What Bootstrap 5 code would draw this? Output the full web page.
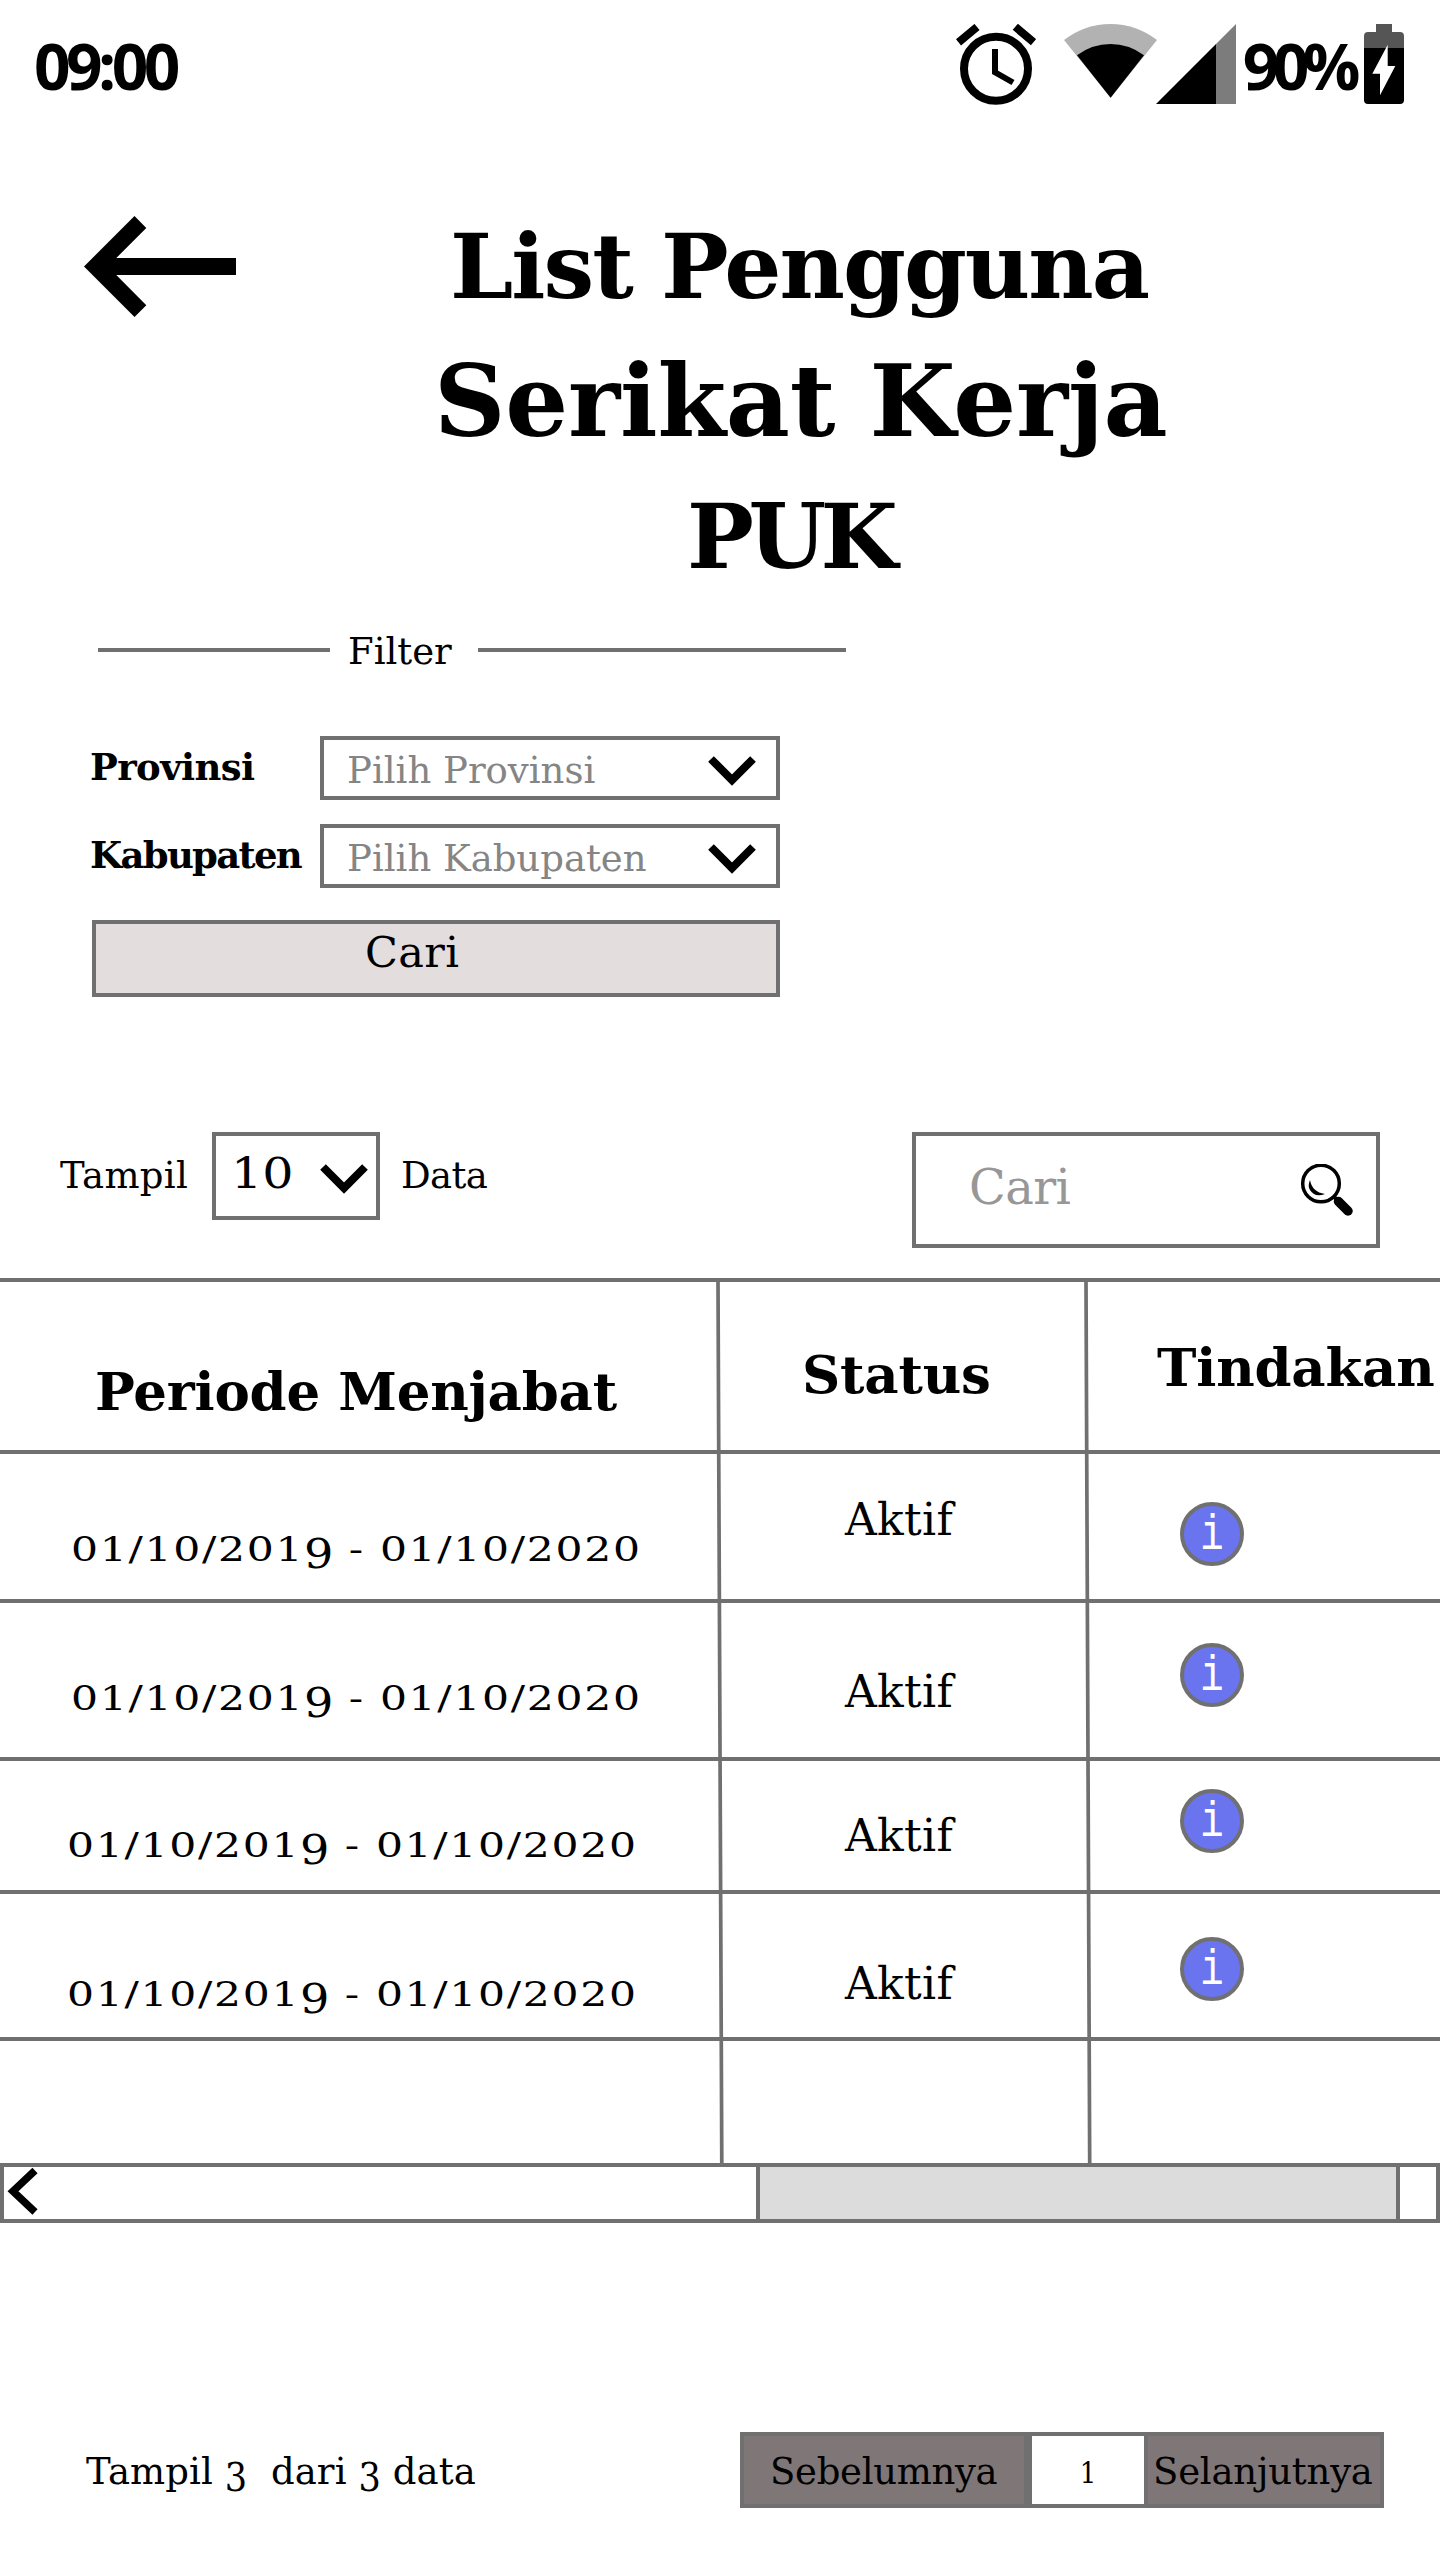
<!DOCTYPE html>
<html lang="id">
<head>
<meta charset="utf-8">
<meta name="viewport" content="width=device-width, initial-scale=1">
<title>List Pengguna Serikat Kerja PUK</title>
<link href="https://cdn.jsdelivr.net/npm/bootstrap@5.3.0/dist/css/bootstrap.min.css" rel="stylesheet">
<style>
:root{--line:#707070}
body{margin:0;background:#fff;color:#000;font-family:"DejaVu Serif",serif;font-size:37px;line-height:1;width:1440px;height:2560px;overflow:hidden}
svg{display:block;flex:none}
.txt{white-space:nowrap;line-height:1;flex:none}
/* status bar */
.statusbar{height:216px;padding:24px 36px 0 34px}
.sys{font:700 64px/1 "Open Sans","Noto Sans",sans-serif;letter-spacing:-4.6px;margin-top:10px}
.sys.level{letter-spacing:-6.5px;padding-left:7px}
.wifi{margin-left:28px}
.signal{margin-left:-1px}
.battery{margin-left:10px}
/* header */
.head{height:418px;padding-left:84px}
.title{margin:5px 0 0 214px;font-weight:700;font-size:90px;width:740px}
.title .l1{letter-spacing:-2px}
.title .l2{font-size:99px;letter-spacing:-.2px;margin:41px 0 0 -16px}
.title .l3{font-size:89px;letter-spacing:-5.5px;margin:41px 0 0 237px}
/* filter */
.legend-row{height:102px;padding-left:98px}
.legend-row .rule{height:4px;background:var(--line);margin-top:14px}
.legend-row .cap{width:148px;padding-left:18px;margin-top:-1px}
.rule.short{width:232px}
.rule.long{width:368px}
.field-row{height:88px;padding-left:90px}
.field-row .name{width:230px;font-weight:700;margin-top:13px;letter-spacing:-.6px}
.field-row .name.wide{letter-spacing:-1.7px}
.box{border:4px solid var(--line);background:#fff;border-radius:0}
.field{width:460px;height:64px;padding:12px 20px 0 23px;color:#858585}
.field svg{margin-top:4px}
.btn-cari{width:688px;height:77px;margin:8px 0 0 92px;padding:7px 0 0 269px;background:#e3dddd;font-size:43px;letter-spacing:.4px}
/* toolbar */
.tools{height:146px;margin-top:135px;padding-left:60px}
.tools .side{margin-top:25px}
.side.first{width:152px;letter-spacing:.3px}
.side.last{width:532px;padding-left:21px;letter-spacing:-.6px}
.count{width:168px;height:88px;padding:17px 8px 0 15px}
.count svg{margin-top:11px}
.ten{font-size:42px;transform:scaleX(1.17);transform-origin:0 0}
.search{width:468px;height:116px;padding:27px 22px 0 53px;color:#979797;font-size:48px;letter-spacing:-.6px}
.search svg{margin-top:1px}
/* table */
.grid-wrap{position:relative;height:885px}
.rules{position:absolute;left:0;top:0;pointer-events:none}
.grid{width:1440px;table-layout:fixed;border-collapse:separate;border-spacing:0;margin:0}
.grid th,.grid td{padding:0;border:0;border-top:4px solid var(--line);vertical-align:top;text-align:left}
.grid th{font-size:53px;font-weight:700;letter-spacing:-.2px;height:172px}
.period{font-size:34px;letter-spacing:1.35px;transform:scaleX(1.25);transform-origin:0 0;margin-left:71px}
.period.near{margin-left:67px}
.osf{font-family:"DejaVu Serif Condensed","DejaVu Serif",serif;vertical-align:-7px;line-height:0}
.period .osf{font-size:41px;letter-spacing:0}
.sum .osf{font-size:39px}
.state{font-size:44px;letter-spacing:.3px;margin-left:127px;padding-top:1px}
.info{width:64px;height:64px;border:4px solid var(--line);border-radius:50%;background:#6a74ee;color:#fff;margin-left:94px;overflow:hidden;padding-top:5px}
.info span{display:block;font:400 50px/1 "Liberation Mono",monospace;transform:scaleX(.78);text-align:center}
/* scrollbar */
.scroller{height:60px;width:1440px;border:4px solid var(--line)}
.thumb{width:644px;height:52px;border:solid var(--line);border-width:0 4px;background:#dcdcdc;margin-left:718px}
/* footer */
.foot{margin-top:209px;padding-left:86px}
.foot .sum{width:654px;margin-top:21px;letter-spacing:.1px}
.pager{width:644px;height:76px;background:#7f7677;border:4px solid var(--line)}
.pager .prev{width:280px;padding:17px 0 0 26px;letter-spacing:-.3px}
.pager .next{padding:17px 0 0 5px;letter-spacing:-.2px}
.pager .num{width:124px;height:68px;background:#fff;border:solid var(--line);border-width:0 4px 0 8px;text-align:center;font:29px/1 "DejaVu Serif Condensed","DejaVu Serif",serif;padding-top:23px}
</style>
<script src="https://cdn.jsdelivr.net/npm/bootstrap@5.3.0/dist/js/bootstrap.bundle.min.js"></script>
</head>
<body>
<header class="statusbar d-flex align-items-start justify-content-between">
  <div class="txt sys">09:00</div>
  <div class="d-flex align-items-start">
    <svg width="80" height="82" viewBox="956 24 80 82" fill="none" stroke="#000">
      <circle cx="996" cy="68.7" r="32" stroke-width="8"/>
      <path d="M995 49V72.3L1013 82.5" stroke-width="6"/>
      <path d="M958.5 42.3L977 27M1015.3 26.8L1033.5 42.2" stroke-width="8"/>
    </svg>
    <svg class="wifi" width="93" height="80" viewBox="1064 24 93 80"><path d="M1064 40Q1085 24 1110.5 24T1157 40L1110.6 97.7Z" fill="#b2b2b2"/><path d="M1077 55.3Q1092 44 1110.5 44T1144 55.3L1110.6 97.7Z"/></svg>
    <svg class="signal" width="80" height="80" viewBox="1156 24 80 80"><path d="M1156 104L1216 44V104Z"/><path d="M1216 44L1236 24V104H1216Z" fill="#7c7c7c"/></svg>
    <div class="txt sys level">90%</div>
    <svg class="battery" width="40" height="80" viewBox="1364 24 40 80"><path d="M1376 24H1392V32H1400Q1404 32 1404 36V48H1364V36Q1364 32 1368 32H1376Z" fill="#555"/><path d="M1364 48H1404V100Q1404 104 1400 104H1368Q1364 104 1364 100Z"/><path d="M1387.7 44.7V66H1395.3L1380 95.3V73.7H1372.3Z" fill="#fff"/></svg>
  </div>
</header>

<div class="head d-flex align-items-start">
  <svg width="152" height="101" viewBox="84 216 152 101"><path d="M84 266.5L134.5 216L146.3 228L116.3 258H236V275H116.3L146.3 305.3L134.5 317Z"/></svg>
  <h1 class="title"><div class="txt l1">List Pengguna</div><div class="txt l2">Serikat Kerja</div><div class="txt l3">PUK</div></h1>
</div>

<div class="legend-row d-flex align-items-start">
  <div class="rule short"></div>
  <div class="txt cap">Filter</div>
  <div class="rule long"></div>
</div>
<div class="field-row d-flex align-items-start">
  <label class="txt name">Provinsi</label>
  <div class="box field d-flex align-items-start justify-content-between"><span class="txt">Pilih Provinsi</span>
    <svg width="48" height="30" viewBox="0 0 48 30"><path d="M3 3L24 24L45 3" fill="none" stroke="#000" stroke-width="8"/></svg></div>
</div>
<div class="field-row d-flex align-items-start">
  <label class="txt name wide">Kabupaten</label>
  <div class="box field d-flex align-items-start justify-content-between"><span class="txt">Pilih Kabupaten</span>
    <svg width="48" height="30" viewBox="0 0 48 30"><path d="M3 3L24 24L45 3" fill="none" stroke="#000" stroke-width="8"/></svg></div>
</div>
<div class="box btn-cari txt">Cari</div>

<div class="tools d-flex align-items-start">
  <div class="txt side first">Tampil</div>
  <div class="box count d-flex align-items-start justify-content-between"><span class="txt ten">10</span>
    <svg width="48" height="30" viewBox="0 0 48 30"><path d="M3 3L24 24L45 3" fill="none" stroke="#000" stroke-width="8"/></svg></div>
  <div class="txt side last">Data</div>
  <div class="box search d-flex align-items-start justify-content-between"><span class="txt">Cari</span>
    <svg width="54" height="54" viewBox="1299 1164 54 54"><circle cx="1320" cy="1183.5" r="18.3" fill="none" stroke="#000" stroke-width="3.5"/><path d="M1309 1180Q1311 1192 1324 1194Q1314 1198 1309 1190Q1306.5 1186 1309 1180Z"/><path d="M1332 1195.5L1336 1200" stroke="#000" stroke-width="4"/><path d="M1337.5 1201.5L1347 1211" stroke="#000" stroke-width="9.5" stroke-linecap="round"/></svg></div>
</div>

<div class="grid-wrap">
  <table class="grid">
    <colgroup><col style="width:718px"><col style="width:368px"><col style="width:354px"></colgroup>
    <thead><tr>
      <th><div class="txt" style="margin:83px 0 0 95px">Periode Menjabat</div></th>
      <th><div class="txt" style="margin:66px 0 0 84px">Status</div></th>
      <th><div class="txt" style="margin:59px 0 0 71px">Tindakan</div></th>
    </tr></thead>
    <tbody>
    <tr style="height:149px">
      <td><div class="txt period" style="margin-top:78px">01/10/201<span class="osf">9</span> - 01/10/2020</div></td>
      <td><div class="txt state" style="margin-top:43px">Aktif</div></td>
      <td><div class="info" style="margin-top:48px"><span>i</span></div></td></tr>
    <tr style="height:158px">
      <td><div class="txt period" style="margin-top:78px">01/10/201<span class="osf">9</span> - 01/10/2020</div></td>
      <td><div class="txt state" style="margin-top:66px">Aktif</div></td>
      <td><div class="info" style="margin-top:40px"><span>i</span></div></td></tr>
    <tr style="height:133px">
      <td><div class="txt period near" style="margin-top:67px">01/10/201<span class="osf">9</span> - 01/10/2020</div></td>
      <td><div class="txt state" style="margin-top:52px">Aktif</div></td>
      <td><div class="info" style="margin-top:28px"><span>i</span></div></td></tr>
    <tr style="height:147px">
      <td><div class="txt period near" style="margin-top:83px">01/10/201<span class="osf">9</span> - 01/10/2020</div></td>
      <td><div class="txt state" style="margin-top:67px">Aktif</div></td>
      <td><div class="info" style="margin-top:43px"><span>i</span></div></td></tr>
    <tr style="height:126px"><td></td><td></td><td></td></tr>
    </tbody>
  </table>
  <svg class="rules" width="1440" height="885" viewBox="0 0 1440 885"><path d="M718 2L721.8 887M1086 2L1089.7 887" stroke="#707070" stroke-width="3.7"/></svg>
</div>

<div class="scroller d-flex align-items-start">
  <svg width="34" height="52" viewBox="4 2167 34 52"><path d="M35 2170.5L13 2191.3L35 2212" fill="none" stroke="#000" stroke-width="7.5"/></svg>
  <div class="thumb"></div>
</div>

<div class="foot d-flex align-items-start">
  <div class="txt sum">Tampil <span class="osf">3</span>&nbsp; dari <span class="osf">3</span> data</div>
  <div class="pager d-flex align-items-start">
    <div class="txt prev">Sebelumnya</div>
    <div class="num">1</div>
    <div class="txt next">Selanjutnya</div>
  </div>
</div>
</body>
</html>
